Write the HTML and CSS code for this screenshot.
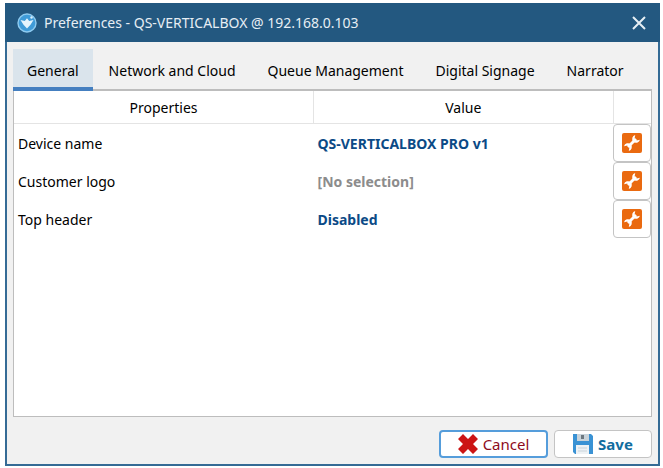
FILE: index.html
```
<!DOCTYPE html>
<html lang="en">

<head>
    <meta charset="UTF-8">
    <meta name="viewport" content="width=device-width, initial-scale=1" />
    <title>Preferences</title>
    <link rel="stylesheet" href="styles.css">
</head>

<body>

    <!-- shared icon for the edit buttons -->
    <svg class="sprite" aria-hidden="true">
        <symbol id="wrench" viewBox="0 0 20 20">
            <rect width="20" height="20" rx="2" fill="#ea6a10" />
            <path d="M6 14 L14 6" stroke="#fff" stroke-width="2.8" />
            <path d="M13.2 2 L12.6 5.4 L14.6 7.4 L18 6.8 A4.2 4.2 0 0 1 11.2 8.8 A4.2 4.2 0 0 1 13.2 2 Z" fill="#fff" />
            <path d="M6.8 18 L7.4 14.6 L5.4 12.6 L2 13.2 A4.2 4.2 0 0 1 8.8 11.2 A4.2 4.2 0 0 1 6.8 18 Z" fill="#fff" />
        </symbol>
    </svg>

    <div class="window">

        <header class="titlebar">
            <svg class="app-icon" viewBox="0 0 20 20" aria-hidden="true">
                <circle cx="10" cy="10" r="9" fill="#3f9bd8" stroke="#8ecbf0" stroke-width="1.4" />
                <path d="M3.5 7 L7.8 8 L10 5.2 L12.2 8 L16.5 7 L13.5 11.8 L10 15.5 L6.5 11.8 Z" fill="#e4f4fd" />
                <circle cx="14.5" cy="4.5" r="1.2" fill="#d9effc" />
            </svg>
            <h1>Preferences - QS-VERTICALBOX @ 192.168.0.103</h1>
            <button type="button" class="close" aria-label="Close">
                <svg viewBox="0 0 14 14"><path d="M1 1 L13 13 M13 1 L1 13" /></svg>
            </button>
        </header>

        <nav class="tabs" role="tablist">
            <button type="button" role="tab" class="tab active" aria-selected="true">General</button>
            <button type="button" role="tab" class="tab">Network and Cloud</button>
            <button type="button" role="tab" class="tab">Queue Management</button>
            <button type="button" role="tab" class="tab">Digital Signage</button>
            <button type="button" role="tab" class="tab">Narrator</button>
        </nav>

        <main class="panel">
            <table class="properties">
                <thead>
                    <tr>
                        <th>Properties</th>
                        <th>Value</th>
                        <th class="tools"></th>
                    </tr>
                </thead>
                <tbody>
                    <tr>
                        <td>Device name</td>
                        <td class="value">QS-VERTICALBOX PRO v1</td>
                        <td class="tools">
                            <button type="button" class="edit" aria-label="Edit device name"><svg><use href="#wrench" /></svg></button>
                        </td>
                    </tr>
                    <tr>
                        <td>Customer logo</td>
                        <td class="value empty">[No selection]</td>
                        <td class="tools">
                            <button type="button" class="edit" aria-label="Edit customer logo"><svg><use href="#wrench" /></svg></button>
                        </td>
                    </tr>
                    <tr>
                        <td>Top header</td>
                        <td class="value">Disabled</td>
                        <td class="tools">
                            <button type="button" class="edit" aria-label="Edit top header"><svg><use href="#wrench" /></svg></button>
                        </td>
                    </tr>
                </tbody>
            </table>
        </main>

        <footer class="actions">
            <button type="button" class="btn cancel">
                <svg viewBox="0 0 20 20" aria-hidden="true">
                    <path d="M5 0 L10 5 L15 0 L20 5 L15 10 L20 15 L15 20 L10 15 L5 20 L0 15 L5 10 L0 5 Z" fill="#cc1515" />
                </svg>
                Cancel
            </button>
            <button type="button" class="btn save">
                <svg viewBox="0 0 20 20" aria-hidden="true">
                    <path d="M0 0 H18 L20 2 V20 H2 L0 18 Z" fill="#3a92d4" />
                    <rect x="4" y="0" width="12" height="7" fill="#c9d3da" />
                    <rect x="8" y="1" width="3" height="4" fill="#6d7880" />
                    <rect x="3" y="11" width="13" height="9" fill="#eef2f5" />
                    <path d="M5 14 H14 M5 17 H14" stroke="#c9d3da" />
                </svg>
                Save
            </button>
        </footer>

    </div>

</body>

</html>
```
FILE: styles.css
```
:root {
    --frame-color: #235880;
    --borders-color: #bdbdbd;
    --lines-color: #e4e4e4;
}

* {
    box-sizing: border-box;
}

body {
    background-color: white;
    display: flex;
    font-family: 'Noto Sans', 'Open Sans', sans-serif;
    font-size: 14px;
    line-height: 20px;
    margin: 0;
    min-height: 100vh;
    padding: 3px 3px 2px 5px;
}

button {
    color: inherit;
    cursor: pointer;
    font: inherit;
}

.sprite {
    display: none;
}

.window {
    background-color: #f1f1f1;
    border: 2px solid #356b95;
    border-top: 0;
    display: flex;
    flex: 1;
    flex-direction: column;
    min-width: 0;
}

/* ====== TITLE BAR ====== */

.titlebar {
    align-items: center;
    background-color: var(--frame-color);
    color: #e6eef4;
    display: flex;
    gap: 7px;
    height: 39px;
    margin: 0 -2px;
    padding: 0 14px 0 12px;
}

.titlebar h1 {
    flex: 1;
    font-size: 14px;
    font-weight: 400;
    margin: 0;
}

.app-icon {
    height: 20px;
    width: 20px;
}

.close {
    background: none;
    border: 0;
    display: flex;
    padding: 0;
}

.close svg {
    fill: none;
    height: 14px;
    stroke: #e6eef4;
    stroke-width: 2;
    width: 14px;
}

/* ====== TABS ====== */

.tabs {
    display: flex;
    margin: 7px 6px 0;
    position: relative;
}

.tab {
    background: none;
    border: 0;
    height: 42px;
    padding: 2px 16px 0;
    white-space: nowrap;
}

.tab.active {
    background-color: #dae4ec;
    border-bottom: 4px solid #447fc0;
    padding: 6px 14px 0;
}

/* ====== PROPERTIES ====== */

.panel {
    background-color: white;
    border: 1px solid var(--borders-color);
    border-top-width: 2px;
    flex: 1;
    margin: -2px 6px 0;
}

.properties {
    border-collapse: collapse;
    table-layout: fixed;
    width: 100%;
}

.properties th {
    border-bottom: 1px solid var(--lines-color);
    border-right: 1px solid var(--lines-color);
    font-weight: 400;
    height: 32px;
    padding: 2px 0 0;
}

.properties th:last-child {
    border-right: 0;
}

.properties td {
    height: 38px;
    padding: 2px 4px 0;
}

.properties .tools {
    padding: 0;
    width: 38px;
}

.value {
    color: #0b4a86;
    font-weight: 700;
}

.value.empty {
    color: #8c8c8c;
}

.edit {
    align-items: center;
    background-color: white;
    border: 1px solid #c4c4c4;
    border-radius: 4px;
    display: flex;
    height: 38px;
    justify-content: center;
    padding: 0;
    width: 100%;
}

.edit svg {
    height: 20px;
    width: 20px;
}

/* ====== ACTIONS ====== */

.actions {
    display: flex;
    font-size: 15px;
    gap: 6px;
    justify-content: flex-end;
    padding: 13px 6px 6px;
}

.btn {
    align-items: center;
    background-color: white;
    border: 1px solid #c4c4c4;
    border-radius: 4px;
    display: flex;
    gap: 5px;
    height: 28px;
    justify-content: center;
    padding: 0 16px;
}

.btn svg {
    height: 20px;
    width: 20px;
}

.cancel {
    border: 2px solid #559ddb;
    color: #8e0b1c;
    min-width: 109px;
}

.save {
    color: #126d9f;
    font-weight: 700;
    min-width: 98px;
}
```
